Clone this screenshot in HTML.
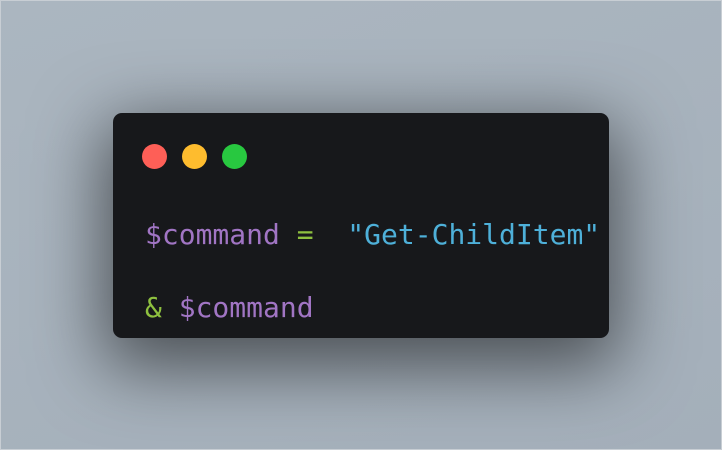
<!DOCTYPE html>
<html><head><style>
html,body{margin:0;padding:0}
body{width:722px;height:450px;overflow:hidden;background:linear-gradient(160deg,#abb6c0,#a4afba);position:relative;box-shadow:inset 0 0 0 1px #c8ced4}
.card{position:absolute;left:113px;top:113px;width:496px;height:225px;background:#17181b;border-radius:9px;box-shadow:0 20px 70px 10px rgba(0,0,0,0.55)}
.dot{position:absolute;top:144px;width:25px;height:25px;border-radius:50%}
.line{position:absolute;left:145px;font-family:"DejaVu Sans Mono","Liberation Mono",monospace;font-size:28px;white-space:pre;line-height:1}
.p{color:#a175c4}.g{color:#8ec03f}.b{color:#4eb0d9}
</style></head><body>
<div class="card"></div>
<div class="dot" style="left:142px;background:#fe5f57"></div>
<div class="dot" style="left:182px;background:#febc2e"></div>
<div class="dot" style="left:222px;background:#28c840"></div>
<div class="line" style="top:221px"><span class="p">$command</span> <span class="g">=</span>  <span class="b">"Get-ChildItem"</span></div>
<div class="line" style="top:294px"><span class="g">&amp;</span> <span class="p">$command</span></div>
</body></html>
